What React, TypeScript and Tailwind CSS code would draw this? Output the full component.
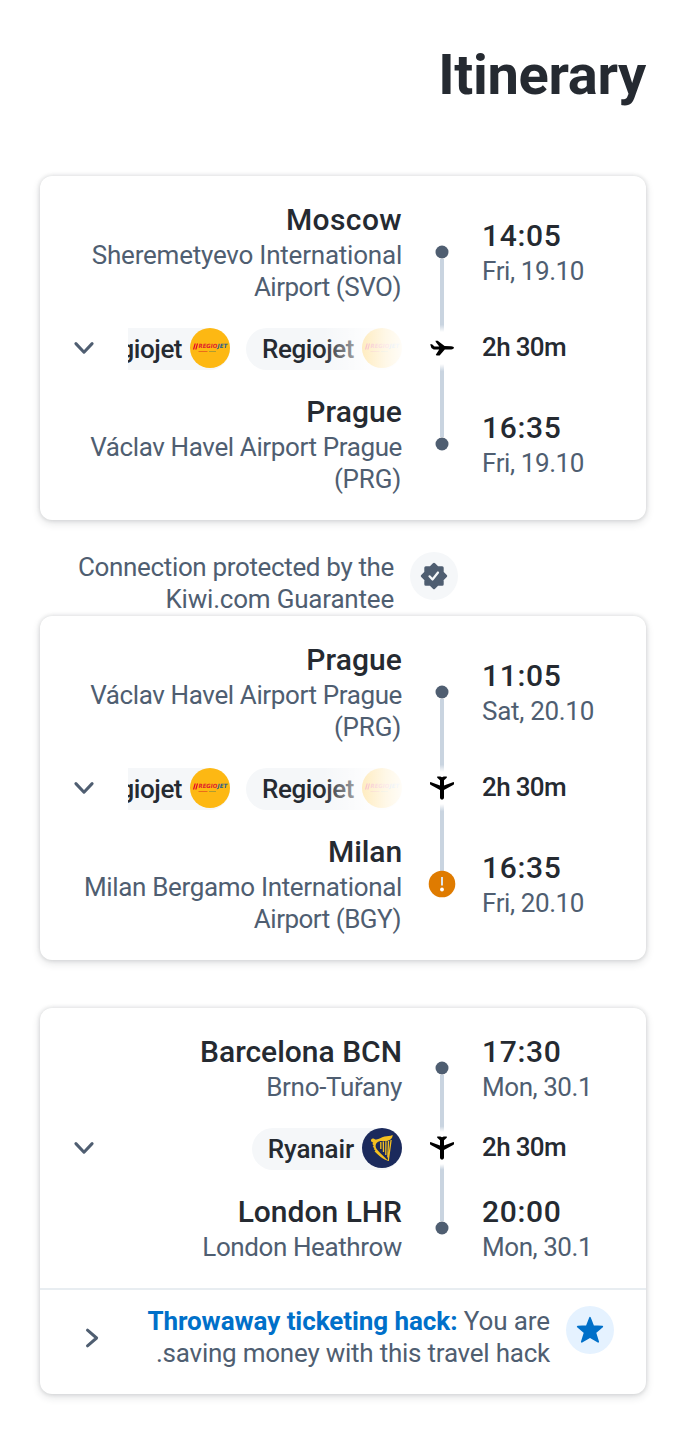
import React from 'react';

type Line = [text: string, tracking: string];
type Stop = { city: Line; airport: Line[]; time: string; date: Line; warning?: boolean };
type Leg = { from: Stop; to: Stop; duration: string; carriers: string[]; plane: 'side' | 'down' };

const havel: Line[] = [
  ['Václav Havel Airport Prague', 'tracking-[-0.38px]'],
  ['(PRG)', 'tracking-[-0.2px] pr-px'],
];

const legs: Leg[] = [
  {
    from: {
      city: ['Moscow', 'tracking-[0.4px]'],
      airport: [
        ['Sheremetyevo International', 'tracking-[-0.22px]'],
        ['Airport (SVO)', 'tracking-[-0.5px] pr-px'],
      ],
      time: '14:05',
      date: ['Fri, 19.10', 'tracking-[-0.4px]'],
    },
    to: { city: ['Prague', 'tracking-[0.1px]'], airport: havel, time: '16:35', date: ['Fri, 19.10', 'tracking-[-0.4px]'] },
    duration: '2h 30m',
    carriers: ['Regiojet', 'Regiojet'],
    plane: 'side',
  },
  {
    from: { city: ['Prague', 'tracking-[0.1px]'], airport: havel, time: '11:05', date: ['Sat, 20.10', 'tracking-[-0.3px]'] },
    to: {
      city: ['Milan', 'tracking-[-0.1px]'],
      airport: [
        ['Milan Bergamo International', 'tracking-[-0.34px]'],
        ['Airport (BGY)', 'tracking-[-0.5px] pr-px'],
      ],
      time: '16:35',
      date: ['Fri, 20.10', 'tracking-[-0.4px]'],
      warning: true,
    },
    duration: '2h 30m',
    carriers: ['Regiojet', 'Regiojet'],
    plane: 'down',
  },
  {
    from: {
      city: ['Barcelona BCN', 'tracking-[0px]'],
      airport: [['Brno-Tuřany', 'tracking-[-0.3px]']],
      time: '17:30',
      date: ['Mon, 30.1', 'tracking-[-0.45px]'],
    },
    to: {
      city: ['London LHR', 'tracking-[0px]'],
      airport: [['London Heathrow', 'tracking-[-0.4px]']],
      time: '20:00',
      date: ['Mon, 30.1', 'tracking-[-0.45px]'],
    },
    duration: '2h 30m',
    carriers: ['Ryanair'],
    plane: 'down',
  },
];

function RegiojetLogo() {
  return (
    <svg viewBox="0 0 40 40" className="size-10 shrink-0">
      <circle cx="20" cy="20" r="20" fill="#fdb813" />
      <path d="M4.600 15.600h1.200l-1.600 5.800H2.900zM6.900 15.600h1.200l-1.600 5.800H5.200z" fill="#e4002b" />
      <text x="8.600" y="20.200" fontSize="5.800" fontWeight="700" fontStyle="italic" fontFamily="DejaVu Sans" textLength="18.600" lengthAdjust="spacingAndGlyphs" fill="#e0182d">REGIO</text>
      <text x="27.600" y="20.200" fontSize="5.800" fontWeight="700" fontStyle="italic" fontFamily="DejaVu Sans" textLength="9.800" lengthAdjust="spacingAndGlyphs" fill="#1d5c8c">JET</text>
      <path d="M8.500 23.500h9" stroke="#e8641b" strokeWidth="0.900" />
      <path d="M19 23.500h7" stroke="#a59a35" strokeWidth="0.900" />
    </svg>
  );
}

function RyanairLogo() {
  return (
    <svg viewBox="0 0 40 40" className="size-10 shrink-0">
      <circle cx="20" cy="20" r="20" fill="#1b2a5c" />
      <path
        d="M9 12.800c-.2-1.600 1-2.700 2.400-2.300.9.300 1.400 1.200 2.900 1 2.900-.2 4.800-2.600 8.200-3.100 2.800-.4 5.200.3 8.300-1.300-.4 3.600-2.700 5.600-6 5.900-3.200.3-5.600-.5-8 .6-2 .9-3.300 2.500-3.200 4.700.2 2.100 1.600 3.600 3.200 5.300 2.700 2.900 6.200 6 9.600 9.400-4.600-1.300-10.300-5.600-13.900-9.700l1-.8-1.900-1.400.9-.9-1.800-1.500 1-1-1.300-1.800.8-1.300c-1.200-.2-2-1-2.200-1.800z"
        fill="#f4c020"
      />
      <path d="M18.800 14v7M21.300 13.500l.2 10.500M23.900 13.300l-.1 13.700M26.500 13l-.7 16.500M29.100 12l-2.900 21" stroke="#f4c020" strokeWidth="1.300" fill="none" />
    </svg>
  );
}

function Carrier({ name }: { name: string }) {
  const ryanair = name === 'Ryanair';
  return (
    <div className="flex h-[42px] shrink-0 items-start rounded-full bg-[#f5f7f9] pl-4">
      <span
        className={
          ryanair
            ? 'mr-2 text-[26px] leading-[42px] font-medium tracking-[-0.15px] text-[#252a31]'
            : 'mr-2 text-[26px] leading-[42px] font-medium tracking-[-0.45px] text-[#252a31]'
        }
      >
        {name}
      </span>
      {ryanair ? <RyanairLogo /> : <RegiojetLogo />}
    </div>
  );
}

function Plane({ kind }: { kind: 'side' | 'down' }) {
  if (kind === 'side') {
    return (
      <svg viewBox="0 0 24 24" className="size-6">
        <path d="M.2 8.200h1.800l2.500 2.300h4.800L5.800 5.900 5.500 4.700h2.200l6.900 5.400 6.500.2c1.700.1 2.900.7 2.900 1.500s-1.200 1.600-2.800 1.600h-6.400l-5.200 6.200H6.600l-.8-.9 3.400-5.300H3.700L1.400 12z" />
      </svg>
    );
  }
  return (
    <svg viewBox="0 0 24 24" className="size-6">
      <path d="M7.200.4h3.100l1.700.8 1.700-.8h3.100v1.300L14 4.200v5.200l9.500-3.300.5.300v1.900l-.9.800L14 14v7.400c0 1.200-.8 2.200-2 2.200s-2-1-2-2.200V14L.9 9.100 0 8.300V6.400l.5-.3L10 9.400V4.200L7.200 1.700z" />
    </svg>
  );
}

function StopText({ stop }: { stop: Stop }) {
  return (
    <div className="w-[322px] text-right whitespace-nowrap">
      <div className={`text-[30px] leading-10 font-medium text-[#252a31] ${stop.city[1]}`}>{stop.city[0]}</div>
      <div className="-mt-px pb-px text-[26px] leading-8 text-[#4f5e71]">
        {stop.airport.map(([text, tracking]) => (
          <div key={text} className={tracking}>{text}</div>
        ))}
      </div>
    </div>
  );
}

function StopTime({ stop }: { stop: Stop }) {
  return (
    <div className="h-[72px]">
      <div className="text-[30px] leading-10 font-medium tracking-[0.7px] text-[#252a31]">{stop.time}</div>
      <div className={`-mt-px text-[26px] leading-8 text-[#4f5e71] ${stop.date[1]}`}>{stop.date[0]}</div>
    </div>
  );
}

function Marker({ warning }: { warning?: boolean }) {
  return warning ? (
    <svg viewBox="0 0 28 28" className="-my-[7px] size-7 shrink-0">
      <circle cx="14" cy="14" r="13.300" fill="#df7b00" />
      <path d="M14 7v8.500" stroke="#dfe5ea" strokeWidth="2" />
      <circle cx="14" cy="19.500" r="1.900" fill="#fff" />
    </svg>
  ) : (
    <svg viewBox="0 0 14 14" className="size-3.5 shrink-0">
      <circle cx="7" cy="7" r="6.500" fill="#4f5e71" />
    </svg>
  );
}

function Rail({ leg }: { leg: Leg }) {
  return (
    <div className="flex w-20 flex-col items-center">
      <Marker />
      <div className="w-1 flex-1 bg-linear-to-b from-[#c9d4e0] from-90% to-white" />
      <div className="flex h-8 items-center">
        <Plane kind={leg.plane} />
      </div>
      <div className="w-1 flex-1 bg-linear-to-t from-[#c9d4e0] from-90% to-white" />
      <Marker warning={leg.to.warning} />
    </div>
  );
}

function Chevron({ right }: { right?: boolean }) {
  return (
    <svg viewBox="0 0 24 24" className="size-6 shrink-0" fill="none" stroke="#4f5e71" strokeWidth="3" strokeLinecap="round" strokeLinejoin="round">
      <path d={right ? 'M7.500 4.200 16.600 12l-9.100 7.800' : 'M3.900 7.600 12 16.200l8.100-8.600'} />
    </svg>
  );
}

function Segment({ leg, compact }: { leg: Leg; compact?: boolean }) {
  const many = leg.carriers.length > 1;
  return (
    <div className="flex py-6 pl-10">
      <div className="flex w-[322px] flex-col">
        <StopText stop={leg.from} />
        <div className="mt-6 mb-[22px] flex h-[42px] items-center justify-between">
          <div className="-ml-2 flex size-6 items-center pb-0.5">
            <Chevron />
          </div>
          <div className={many ? 'relative flex w-[274px] justify-end gap-4 overflow-hidden' : 'flex'}>
            {leg.carriers.map((c, i) => (
              <Carrier key={i} name={c} />
            ))}
            {many && (
              <div className="absolute inset-y-0 right-0 w-20 bg-[linear-gradient(to_left,rgba(255,255,255,0.97),rgba(255,255,255,0.9)_20%,rgba(255,255,255,0.75)_48%,rgba(255,255,255,0.48)_65%,rgba(255,255,255,0))]" />
            )}
          </div>
        </div>
        <StopText stop={leg.to} />
      </div>
      <div className={compact ? 'flex py-[29px]' : 'flex py-[45px]'}>
        <Rail leg={leg} />
      </div>
      <div className={compact ? 'flex h-[232px] flex-1 flex-col' : 'flex h-[296px] flex-1 flex-col py-4'}>
        <StopTime stop={leg.from} />
        <div className="flex flex-1 items-center pb-0.5 text-[26px] leading-8 font-medium tracking-[-0.65px] text-[#252a31]">{leg.duration}</div>
        <StopTime stop={leg.to} />
      </div>
    </div>
  );
}

function Card({ children }: { children: React.ReactNode }) {
  return <section className="rounded-xl bg-white shadow-[0_0_4px_rgba(37,42,49,0.16),0_3px_8px_rgba(37,42,49,0.14)]">{children}</section>;
}

export default function App() {
  return (
    <main className="min-h-[1434px] bg-white px-10 pt-10 pb-10 font-[Roboto,sans-serif]">
      <h1 className="h-[136px] text-right text-[56px] leading-[70px] font-bold tracking-[-0.3px] text-[#252a31]">Itinerary</h1>
      <Card><Segment leg={legs[0]} /></Card>
      <div className="flex h-24 pt-8">
        <div className="-mt-px w-[354px] text-right text-[26px] leading-8 text-[#4f5e71]">
          <p className="tracking-[-0.35px]">Connection protected by the</p>
          <p className="tracking-[-0.2px]">Kiwi.com Guarantee</p>
        </div>
        <div className="ml-4 flex size-12 items-center justify-center rounded-full bg-[#f5f7f9]">
          <svg viewBox="0 0 28 28" className="size-7">
            <path
              d="M14 2.300 17.500 5.800H22.200V10.500L25.700 14 22.200 17.500V22.200H17.500L14 25.700 10.500 22.200H5.800V17.500L2.300 14 5.800 10.500V5.800H10.500z"
              fill="#4f5e71"
              stroke="#4f5e71"
              strokeWidth="3"
              strokeLinejoin="round"
            />
            <path d="m9.500 14.300 3 3.200 5.500-7" fill="none" stroke="#f5f7f9" strokeWidth="2.200" strokeLinecap="round" strokeLinejoin="round" />
          </svg>
        </div>
      </div>
      <Card><Segment leg={legs[1]} /></Card>
      <div className="h-12" />
      <Card>
        <Segment leg={legs[2]} compact />
        <div className="flex h-[106px] border-t-2 border-[#e8edf1] pt-4 pr-8 pl-10">
          <div className="flex h-16 w-6 items-center">
            <Chevron right />
          </div>
          <div dir="rtl" className="-mt-px flex-1 text-[26px] leading-8 whitespace-nowrap text-[#4f5e71]">
            <p className="tracking-[-0.1px]">
              <span className="font-bold tracking-[-0.06px] text-[#0070c9]">Throwaway ticketing hack:</span> You are
            </p>
            <p className="tracking-[-0.23px]">saving money with this travel hack.</p>
          </div>
          <div className="ml-4 flex size-12 items-center justify-center rounded-full bg-[#e5f2ff]">
            <svg viewBox="0 0 28 28" className="size-7">
              <path
                d="m14 1.700 3.300 8.500 9 .5-7 5.800 2.900 9.300L14 21.100l-8.200 4.700 2.900-9.300-7-5.800 9-.5z"
                fill="#0070c9"
                stroke="#0070c9"
                strokeWidth="1.700"
                strokeLinejoin="round"
              />
            </svg>
          </div>
        </div>
      </Card>
    </main>
  );
}
